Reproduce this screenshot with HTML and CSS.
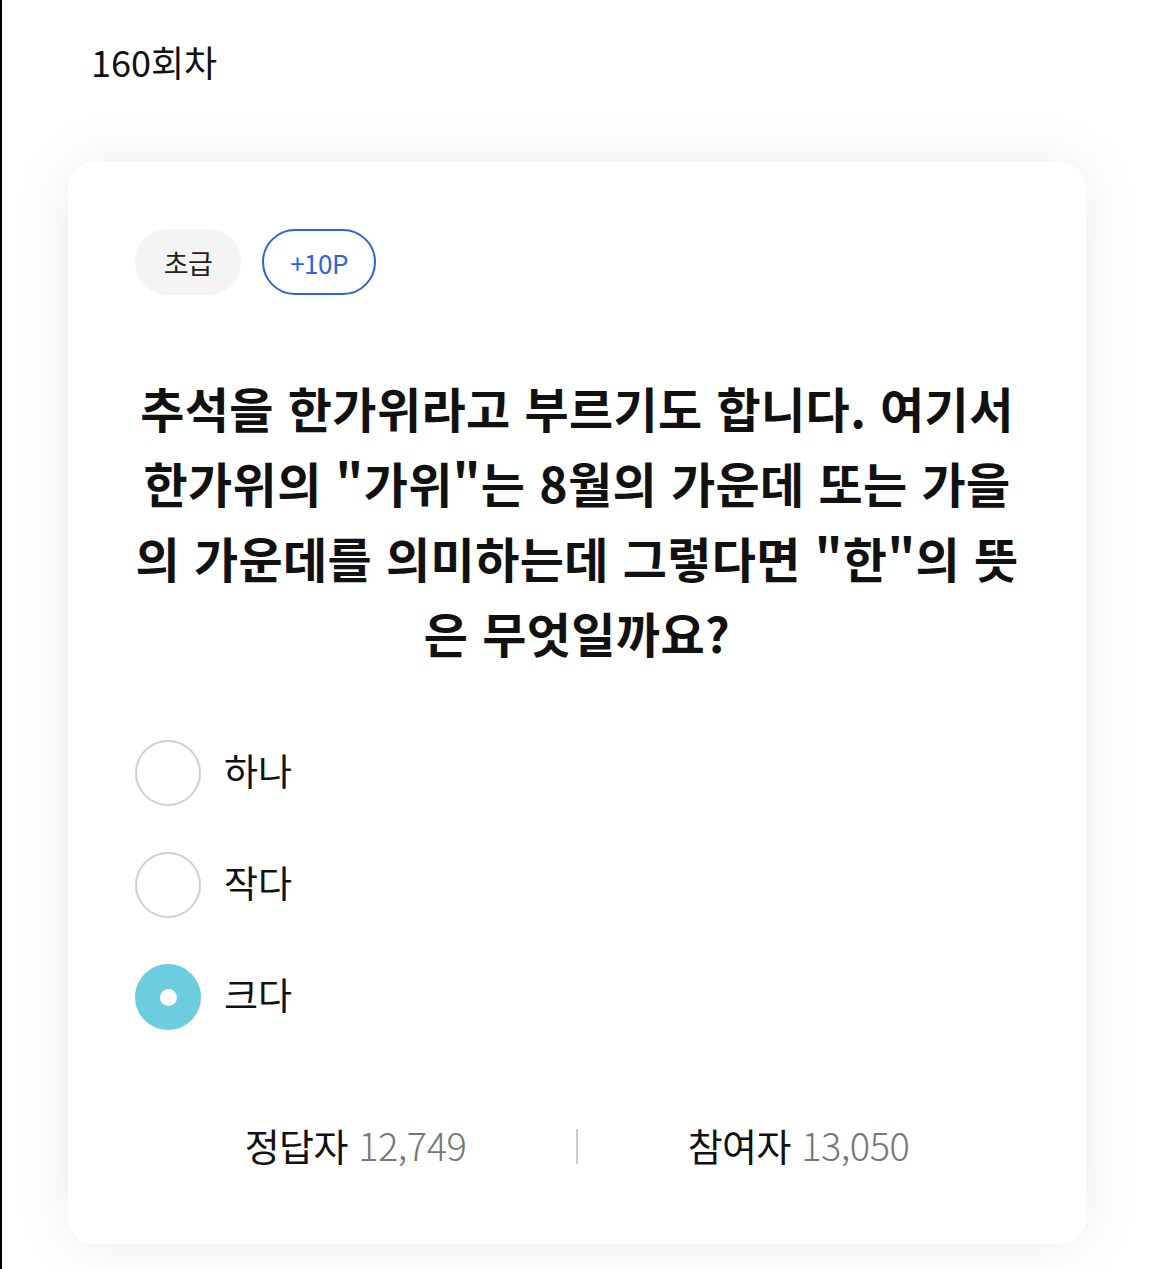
FILE: index.html
```html
<!DOCTYPE html>
<html lang="ko">
<head>
  <meta charset="UTF-8">
  <meta name="viewport" content="width=device-width, initial-scale=1.0">
  <title>160회차 퀴즈</title>
  <link rel="stylesheet" href="styles.css">
</head>
<body>
  <div class="page">
    <h1 class="round">160회차</h1>

    <!-- 퀴즈 카드 -->
    <section class="quiz-card">
      <div class="tags">
        <span class="tag tag-level">초급</span>
        <span class="tag tag-point">+10P</span>
      </div>

      <p class="question">추석을 한가위라고 부르기도 합니다. 여기서 한가위의 "가위"는 8월의 가운데 또는 가을의 가운데를 의미하는데 그렇다면 "한"의 뜻은 무엇일까요?</p>

      <ul class="options">
        <li class="option"><span class="radio"></span><span class="label">하나</span></li>
        <li class="option"><span class="radio"></span><span class="label">작다</span></li>
        <li class="option selected"><span class="radio"></span><span class="label">크다</span></li>
      </ul>

      <div class="stats">
        <div class="stat">정답자 <span class="num">12,749</span></div>
        <span class="divider"></span>
        <div class="stat">참여자 <span class="num">13,050</span></div>
      </div>
    </section>
  </div>
</body>
</html>
```

FILE: styles.css
```css
/* 색상 */
:root {
  --text: #111111;
  --muted: #777777;
  --tag-bg: #f4f4f4;
  --blue: #2d64dc;
  --radio-line: #cfcfcf;
  --radio-on: #6ccde0;
}

* { margin: 0; padding: 0; box-sizing: border-box; }
body {
  font-family: "Noto Sans CJK KR", "Noto Sans", sans-serif;
  background: #fff;
  color: var(--text);
}

.page {
  border-left: 2px solid #000;
  min-height: 100vh;
  padding: 0 66px;
}

/* 회차 */
.round {
  font-size: 36px;
  font-weight: 400;
  line-height: 50px;
  padding: 36px 0 0 23px;
  height: 162px;
}

/* 카드 */
.quiz-card {
  background: #fff;
  border-radius: 26px;
  box-shadow: 0 0 60px rgba(0,0,0,0.085);
  padding: 67px 67px 77px;
}

.tags { display: flex; gap: 21px; }
.tag {
  height: 66px;
  border-radius: 33px;
  display: inline-flex;
  align-items: center;
  justify-content: center;
  font-size: 27px;
  letter-spacing: -0.5px;
}
.tag-level { width: 106px; background: var(--tag-bg); color: #222; }
.tag-point { width: 114px; border: 2px solid var(--blue); color: var(--blue); font-size: 26px; }

.question {
  margin-top: 75px;
  font-size: 48px;
  font-weight: 700;
  line-height: 75px;
  text-align: center;
  word-break: break-all;
  letter-spacing: 0.4px;
}

/* 보기 */
.options {
  list-style: none;
  margin-top: 70px;
  display: flex;
  flex-direction: column;
  gap: 46px;
}
.option { display: flex; align-items: center; gap: 23px; height: 66px; }
.radio {
  width: 66px;
  height: 66px;
  border-radius: 50%;
  border: 2.5px solid var(--radio-line);
  display: flex;
  align-items: center;
  justify-content: center;
}
.option.selected .radio { background: var(--radio-on); border-color: var(--radio-on); }
.option.selected .radio::after {
  content: '';
  width: 17px;
  height: 17px;
  border-radius: 50%;
  background: #fff;
}
.label { font-size: 37px; line-height: 1; margin-top: -6px; }

/* 통계 */
.stats {
  margin-top: 87px;
  display: grid;
  grid-template-columns: 1fr auto 1fr;
  align-items: center;
  height: 50px;
}
.stat { text-align: center; font-size: 38px; letter-spacing: -0.5px; }
.stat .num { color: var(--muted); font-weight: 300; }
.divider { width: 2px; height: 35px; background: #cccccc; margin-top: 4px; }
```
